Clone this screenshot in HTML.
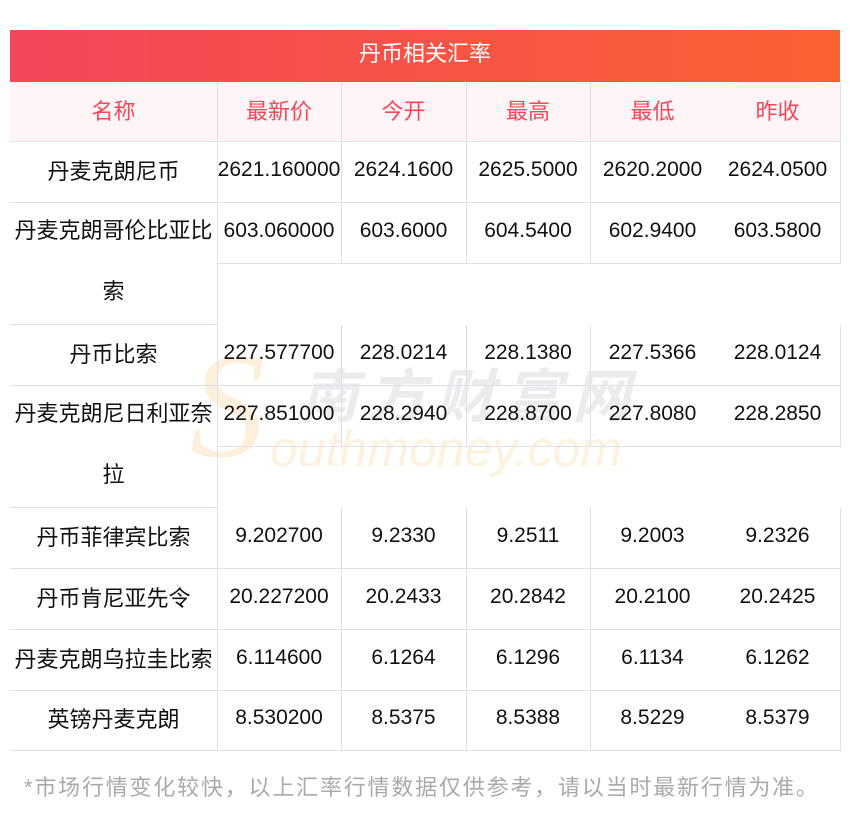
<!DOCTYPE html>
<html><head><meta charset="utf-8"><style>
body{margin:0;width:850px;height:817px;background:#fff;position:relative;overflow:hidden;font-family:"Liberation Sans","Noto Sans CJK SC",sans-serif;}
.t{position:absolute;left:10px;top:30px;width:830px;height:52px;background:linear-gradient(90deg,#f5455a,#f96132);color:#fff;font-size:22px;line-height:48px;text-align:center;}
.h{position:absolute;left:10px;top:82px;width:830px;height:60px;background:#fff5f6;}
.c{position:absolute;font-size:22px;text-align:center;color:#111;display:flex;align-items:center;justify-content:center;box-sizing:border-box;white-space:nowrap;padding-bottom:5px;}
.n{font-size:21px;}
.hc{color:#f5475b;}
.l{position:absolute;background:#e0e0ea;}
.wm{position:absolute;font-style:italic;}
.f{position:absolute;left:24px;top:770px;font-size:22px;color:#aaa;white-space:nowrap;letter-spacing:1.8px;}
</style></head><body>
<div class="t">丹币相关汇率</div>
<div class="h"></div>
<div class="wm" style="left:190px;top:320px;font-size:150px;font-family:'Liberation Serif',serif;color:rgba(245,190,110,0.25)">S</div>
<div class="wm" style="left:300px;top:350px;font-size:58px;color:rgba(150,150,150,0.18);font-weight:bold;letter-spacing:10px">南方财富网</div>
<div class="wm" style="left:270px;top:420px;font-size:50px;color:rgba(245,190,110,0.22)">outhmoney.com</div>
<div id="g"></div>
<div class="f">*市场行情变化较快，以上汇率行情数据仅供参考，请以当时最新行情为准。</div>
<script>
var X=[10,217,341,466,590,715,840];
var g=document.getElementById('g'),h='';
function cell(x1,x2,y1,y2,t,cls){h+='<div class="c '+(cls||'')+'" style="left:'+x1+'px;width:'+(x2-x1)+'px;top:'+y1+'px;height:'+(y2-y1)+'px">'+t+'</div>';}
function hl(x1,x2,y){h+='<div class="l" style="left:'+x1+'px;width:'+(x2-x1)+'px;top:'+y+'px;height:1px"></div>';}
function vl(x,y1,y2){h+='<div class="l" style="left:'+x+'px;top:'+y1+'px;width:1px;height:'+(y2-y1)+'px"></div>';}
var hd=['名称','最新价','今开','最高','最低','昨收'];
for(var i=0;i<6;i++)cell(X[i],X[i+1],82,142,hd[i],'hc');
[217,341,466,590,840].forEach(function(x){vl(x,82,142)});
var rows=[
['丹麦克朗尼币','2621.160000','2624.1600','2625.5000','2620.2000','2624.0500',142,0],
['丹麦克朗哥伦比亚比<br>索','603.060000','603.6000','604.5400','602.9400','603.5800',203,1],
['丹币比索','227.577700','228.0214','228.1380','227.5366','228.0124',325,0],
['丹麦克朗尼日利亚奈<br>拉','227.851000','228.2940','228.8700','227.8080','228.2850',386,1],
['丹币菲律宾比索','9.202700','9.2330','9.2511','9.2003','9.2326',508,0],
['丹币肯尼亚先令','20.227200','20.2433','20.2842','20.2100','20.2425',569,0],
['丹麦克朗乌拉圭比索','6.114600','6.1264','6.1296','6.1134','6.1262',630,0],
['英镑丹麦克朗','8.530200','8.5375','8.5388','8.5229','8.5379',690,0]];
rows.forEach(function(r){
 var y=r[6],tall=r[7],yb=y+(tall?122:61),yd=y+61;
 if(tall){h+='<div class="c" style="left:10px;width:207px;top:'+(y-3)+'px;height:122px;line-height:61px;white-space:normal;padding:0">'+r[0]+'</div>';}
 else cell(10,217,y,yb,r[0]);
 for(var i=1;i<6;i++)cell(X[i],X[i+1],y,yd,r[i],'n');
 hl(10,217,yb-1);hl(217,840,yd-1);
 vl(217,y,yb);[341,466,590,840].forEach(function(x){vl(x,y,yd)});
});
hl(10,840,141);
g.innerHTML=h;
</script>
</body></html>
